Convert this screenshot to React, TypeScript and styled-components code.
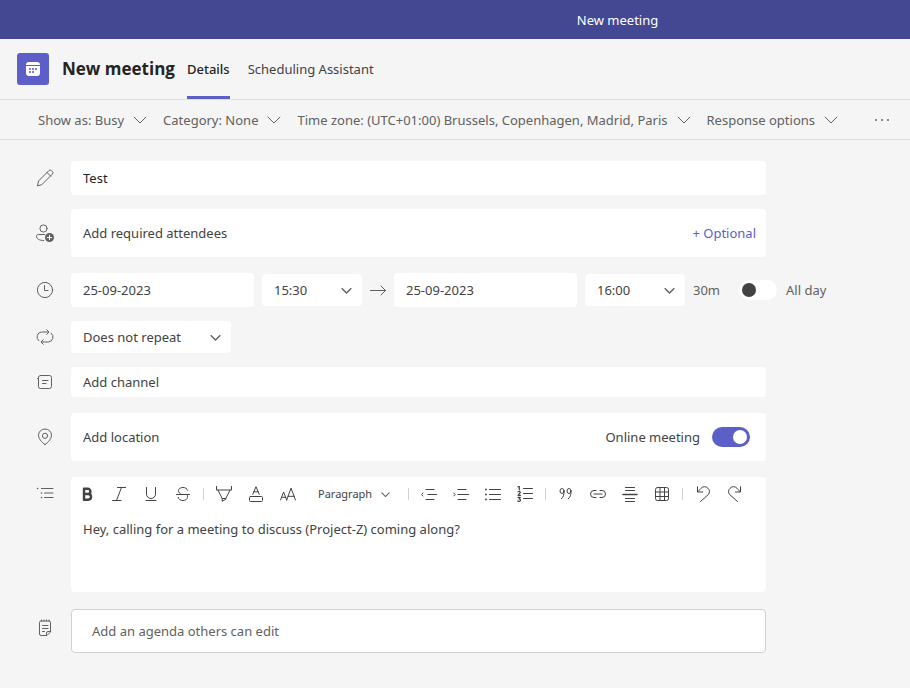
import React from "react";
import styled, { createGlobalStyle } from "styled-components";

const GlobalStyle = createGlobalStyle`
  *, *::before, *::after { box-sizing: border-box; }
  html { min-height: 100%; background: #f5f5f5; }
  body { margin: 0; color: #424242; }
  body, button, input, select, textarea {
    font-family: "Noto Sans", "Open Sans", sans-serif;
    font-size: 13px;
    line-height: 20px;
  }
`;

const TopBar = styled.div`
  display: flex;
  align-items: center;
  justify-content: center;
  height: 39px;
  padding-left: 325px;
  background: #444791;
  color: #ffffff;
`;

const Header = styled.header`
  display: flex;
  align-items: center;
  height: 61px;
  padding: 0 17px;
  border-bottom: 1px solid #dedede;
`;

const AppTile = styled.span`
  display: grid;
  place-items: center;
  width: 32px;
  height: 32px;
  margin-right: 13px;
  border-radius: 3px;
  background: #5b5fc7;
`;

const Title = styled.h1`
  margin: 0 12px 0 0;
  color: #242424;
  font-family: "Open Sans", "Noto Sans", sans-serif;
  font-size: 17px;
  line-height: 24px;
  font-weight: 700;
  white-space: nowrap;
`;

const Tabs = styled.div`
  display: flex;
  align-self: stretch;
  gap: 18px;
`;

const Tab = styled.button<{ $active?: boolean }>`
  padding: 3px 0 0;
  border: 0;
  border-bottom: 3px solid ${(p) => (p.$active ? "#5b5fc7" : "transparent")};
  background: none;
  color: ${(p) => (p.$active ? "#242424" : "#424242")};
  font-weight: ${(p) => (p.$active ? 500 : 400)};
  white-space: nowrap;
`;

const OptionsBar = styled.div`
  display: flex;
  align-items: center;
  gap: 16px;
  height: 40px;
  padding: 0 20px 0 38px;
  border-bottom: 1px solid #dedede;
`;

const OptionButton = styled.button`
  display: flex;
  align-items: center;
  gap: 9px;
  padding: 0;
  border: 0;
  background: none;
  color: #616161;
  white-space: nowrap;
`;

const MoreButton = styled(OptionButton)`
  margin-left: auto;
`;

const Form = styled.form`
  display: flex;
  flex-direction: column;
  padding: 21px 0 35px 36px;
`;

const Row = styled.div<{ $gap?: number; $wide?: boolean; $top?: boolean }>`
  display: grid;
  grid-template-columns: 18px minmax(0, 1fr);
  column-gap: 17px;
  align-items: ${(p) => (p.$top ? "start" : "center")};
  margin-bottom: ${(p) => p.$gap ?? 14}px;
  padding-right: ${(p) => (p.$wide ? 80 : 144)}px;
  color: #616161;
`;

const RowIcon = styled.span<{ $top?: number }>`
  display: flex;
  padding-top: ${(p) => p.$top ?? 0}px;
`;

const Box = styled.div<{ $height: number }>`
  display: flex;
  align-items: center;
  min-height: ${(p) => p.$height}px;
  padding: 0 12px;
  border-radius: 4px;
  background: #ffffff;
`;

const OutlinedBox = styled(Box)`
  padding: 0 20px;
  border: 1px solid #d1d1d1;
`;

const TextInput = styled.input<{ $muted?: boolean }>`
  flex: 1;
  min-width: 0;
  width: 100%;
  padding: 0;
  border: 0;
  outline: 0;
  background: none;
  color: #242424;
  &::placeholder {
    color: ${(p) => (p.$muted ? "#616161" : "#424242")};
    opacity: 1;
  }
`;

const OptionalButton = styled.button`
  margin-right: -2px;
  padding: 0;
  border: 0;
  background: none;
  color: #5b5fc7;
`;

const DateTimeLine = styled.div`
  display: flex;
  align-items: center;
  gap: 8px;
`;

const DateBox = styled(Box)`
  flex: 0 1 183px;
  min-width: 0;
`;

const DateInput = styled(TextInput)`
  color: #424242;
`;

const SelectShell = styled.span<{ $width: number }>`
  display: grid;
  flex: none;
  align-items: center;
  width: ${(p) => p.$width}px;
  height: 32px;
  border-radius: 4px;
  background: #ffffff;
  color: #424242;
  > * { grid-area: 1 / 1; }
  > svg { justify-self: end; margin-right: 10px; pointer-events: none; }
`;

const StyleShell = styled(SelectShell)`
  > svg { margin-right: 14px; }
`;

const NativeSelect = styled.select<{ $small?: boolean }>`
  appearance: none;
  width: 100%;
  height: 100%;
  padding: 0 ${(p) => (p.$small ? 14 : 12)}px;
  border: 0;
  background: none;
  color: #424242;
  font-size: ${(p) => (p.$small ? 11 : 13)}px;
`;

const Duration = styled.span`
  width: 38px;
`;

const SwitchLabel = styled.label<{ $reverse?: boolean }>`
  display: flex;
  flex: none;
  flex-direction: ${(p) => (p.$reverse ? "row-reverse" : "row")};
  align-items: center;
  gap: ${(p) => (p.$reverse ? 12 : 9)}px;
  margin-right: ${(p) => (p.$reverse ? 4 : 0)}px;
  white-space: nowrap;
`;

const Switch = styled.input`
  appearance: none;
  display: flex;
  align-items: center;
  width: 38px;
  height: 20px;
  margin: 0;
  padding: 0 3px;
  border-radius: 10px;
  background: #ffffff;
  &::before {
    content: "";
    width: 14px;
    height: 14px;
    border-radius: 50%;
    background: #424242;
  }
  &:checked {
    justify-content: flex-end;
    background: #5b5fc7;
  }
  &:checked::before { background: #ffffff; }
`;

const Dark = styled.span`
  color: #424242;
`;

const Editor = styled.div`
  border-radius: 4px;
  background: #ffffff;
  overflow: hidden;
`;

const EditorTools = styled.div`
  display: flex;
  align-items: center;
  height: 34px;
`;

const ToolButton = styled.button`
  display: grid;
  flex: 0 1 32px;
  place-items: center;
  height: 32px;
  padding: 0;
  border: 0;
  background: none;
  color: #424242;
`;

const Separator = styled.span`
  flex: none;
  width: 1px;
  height: 12px;
  margin: 0 4px;
  background: #d1d1d1;
`;

const EditorText = styled.textarea`
  display: block;
  width: 100%;
  height: 81px;
  padding: 8px 12px;
  border: 0;
  outline: 0;
  resize: none;
  background: none;
  color: #424242;
`;

type IconProps = { size?: number; weight?: number; children: React.ReactNode };

const Icon = ({ size = 16, weight = 1, children }: IconProps) => (
  <svg width={size} height={size} viewBox={`0 0 ${size} ${size}`} fill="none" stroke="currentColor"
    strokeWidth={weight} strokeLinecap="round" strokeLinejoin="round" aria-hidden="true">
    {children}
  </svg>
);

const ThinChevron = () => (
  <svg width="14" height="8" viewBox="0 0 14 8" fill="none" stroke="currentColor" aria-hidden="true">
    <path d="M.8.8 7 7 13.2.8" />
  </svg>
);

const Chevron = ({ size = 11 }: { size?: number }) => (
  <svg width={size} height={size} viewBox="0 0 11 11" fill="none" stroke="#616161" strokeWidth="1.4" aria-hidden="true">
    <path d="M.7 3.2 5.5 8l4.8-4.8" />
  </svg>
);

const leftIcons = {
  pencil: (
    <Icon size={18}>
      <path d="m1.5 16.5 1.1-4.6L12.8 1.7a1.9 1.900 0 0 1 2.800 0l.7.7a1.900 1.900 0 0 1 0 2.800L6.100 15.400zM11 3.500l3.700 3.700" />
    </Icon>
  ),
  person: (
    <Icon size={18}>
      <circle cx="7.500" cy="4.500" r="3.600" />
      <path d="M8.500 10.500H2.200c-1 0-1.700.7-1.700 1.700 0 2.700 2.800 4.300 7.200 4.300" />
      <circle cx="13.500" cy="13.500" r="4.500" fill="currentColor" stroke="none" />
      <path d="M13.500 11.300v4.400M11.300 13.500h4.400" stroke="#fff" />
    </Icon>
  ),
  clock: (
    <Icon size={18}>
      <circle cx="9" cy="9" r="7.600" />
      <path d="M8.500 4.500v5h3.500" />
    </Icon>
  ),
  repeat: (
    <Icon size={18}>
      <path d="M2.800 12.800A5 5 0 0 1 5.500 4h7.200M10.700 1.700 13 4l-2.300 2.400M15.200 5.200A5 5 0 0 1 12.500 14H5.300M7.300 11.600 5 14l2.300 2.300" />
    </Icon>
  ),
  channel: (
    <Icon size={18}>
      <rect x="2.500" y="2.500" width="13" height="13" rx="2" />
      <path d="M1.500 5.500h1M6.500 7.500h5.500M6.500 10.500h3.500" />
    </Icon>
  ),
  pin: (
    <Icon size={18}>
      <path d="M9 16.600c-.5 0-6.500-4.800-6.500-9.400a6.500 6.200 0 0 1 13 0c0 4.600-6 9.400-6.500 9.400z" />
      <circle cx="9" cy="7.800" r="2.600" />
    </Icon>
  ),
  list: (
    <Icon size={18}>
      <path d="M5.500 4.500h11.500M8.500 9h8.500M8.500 13.500h8.500" />
      <path d="M1.500 4.500h.1M5.500 9h.1M5.500 13.500h.1" strokeWidth="1.600" />
    </Icon>
  ),
  notes: (
    <Icon size={18}>
      <path d="M10.500 16.500H5A1.500 1.500 0 0 1 3.500 15V3.500A1.500 1.500 0 0 1 5 2h8A1.500 1.500 0 0 1 14.500 3.500V12.500zM10.500 16.500V14a1.500 1.500 0 0 1 1.500-1.500H14.500" />
      <path d="M5.500 1v1M8 1v1M10.500 1v1M13 1v1M6.500 6.500h5.500M6.500 9.500h5.500M6.500 12.500h2" />
    </Icon>
  ),
};

const tools: Record<string, React.ReactNode> = {
  Bold: <Icon weight={2.4}><path d="M5 2.800h3.800a2.600 2.600 0 0 1 0 5.200H5zM5 8h4.200a2.800 2.800 0 0 1 0 5.700H5z" /></Icon>,
  Italic: <Icon><path d="M6.500 1.500h8M1.500 14.500h8.500M10.500 1.500l-5 13" /></Icon>,
  Underline: <Icon><path d="M3.500 1.500v6.500a4.500 4.500 0 0 0 9 0V1.500M3 14.500h10" /></Icon>,
  Strikethrough: <Icon><path d="M12.500 4.200C12 2.500 10.300 1.500 8 1.500c-2.600 0-4.500 1.200-4.500 3.200 0 1.800 1.300 2.800 3 3.800M1.500 8.500h13M12.200 8.800c1.300 2.700-.4 5.700-4.200 5.700-2.600 0-4.500-1.200-4.800-3.200" /></Icon>,
  Highlight: <Icon><path d="M.5.500v3.500h15V.500M2 4.200l4.200 8.300v2.800l3.600-2V12.500L14 4.200M6.200 12.500h3.600" /></Icon>,
  "Font color": <Icon><rect x="1.500" y="10.500" width="13" height="5" rx="1" /><path d="m4.800 8.300L8 .7l3.200 7.600M5.900 5.800h4.200" /></Icon>,
  "Font size": <Icon><path d="m.5 14 3.100-8 3.100 8M1.600 11.300h4M6.700 14 11 2.200 15.500 14M8.100 10.300h6" /></Icon>,
  "Decrease indent": <Icon><path d="M5 3.500h8M7 8.500h8.500M5 13.500h8M2 7 .5 8.500 2 10" /></Icon>,
  "Increase indent": <Icon><path d="M5 3.500h8M5 8.500h10.500M5 13.500h8M.7 7l1.500 1.500L.7 10" /></Icon>,
  "Bulleted list": <Icon><path d="M4.500 3.500h11M4.500 8.500h11M4.500 13.500h11" /><path d="M.9 3.500h.1M.9 8.500h.1M.9 13.500h.1" strokeWidth="1.800" /></Icon>,
  "Numbered list": <Icon><path d="M6.500 2.500h9M6.500 7.500h9M6.500 12.500h9" /><path d="m1 .8 1.300-.5v3.600M1 5.900c1-.8 2.700-.2 2.100 1L1 9.300h2.500M1 11.300h2.300L2 12.800c2 0 1.900 2.500.2 2.500-.6 0-1-.1-1.400-.4" strokeWidth="1.200" /></Icon>,
  Quote: <Icon><ellipse cx="4" cy="5" rx="2" ry="2.500" /><ellipse cx="11" cy="5" rx="2" ry="2.500" /><path d="M6 5c.2 3.400-.5 6-2.600 7.800M13 5c.2 3.400-.5 6-2.600 7.800" /></Icon>,
  Link: <Icon><path d="M6 4.500H4a3.500 3.500 0 0 0 0 7h2M10 4.500h2a3.500 3.500 0 0 1 0 7h-2M4 8h8" /></Icon>,
  "Insert divider": <Icon><path d="M3.500 1.500h9M3.500 4.500h9M3.500 12.500h9M3.500 15.500h9" /><path d="M1 8.500h14" strokeWidth="1.500" /></Icon>,
  "Insert table": <Icon><rect x="1.500" y="1.500" width="13" height="13" rx="2" /><path d="M6 1.500v13M10.500 1.500v13M1.500 6h13M1.500 10.500h13" /></Icon>,
  Undo: <Icon><path d="M2.500.800v5.200h5.200M2.700 5.800 6 2.300a4.600 4.600 0 0 1 7 0 4.500 4.500 0 0 1 .3 6.300L5.500 15.500" /></Icon>,
  Redo: <Icon><path d="M13.500.800v5.200H8.300M13.300 5.800 10 2.300a4.600 4.600 0 0 0-7 0 4.500 4.500 0 0 0-.3 6.300L10.500 15.500" /></Icon>,
};

const ToolGroup = ({ names }: { names: string[] }) => (
  <>
    {names.map((name) => (
      <ToolButton key={name} type="button" aria-label={name}>{tools[name]}</ToolButton>
    ))}
  </>
);

const TimeSelect = ({ label, value }: { label: string; value: string }) => (
  <SelectShell $width={100}>
    <NativeSelect aria-label={label} defaultValue={value}>
      <option>{value}</option>
    </NativeSelect>
    <Chevron />
  </SelectShell>
);

const options = [
  "Show as: Busy",
  "Category: None",
  "Time zone: (UTC+01:00) Brussels, Copenhagen, Madrid, Paris",
  "Response options",
];

export default function App() {
  return (
    <>
      <GlobalStyle />
      <TopBar>New meeting</TopBar>
      <Header>
        <AppTile>
          <svg width="14" height="14" viewBox="0 0 14 14" fill="#fff" aria-hidden="true">
            <path d="M0 3a3 3 0 0 1 3-3h8a3 3 0 0 1 3 3z" />
            <path d="M0 4h14v7a3 3 0 0 1-3 3H3a3 3 0 0 1-3-3z" />
            <path d="M3 6h2v2H3zM6 6h2v2H6zM9 6h2v2H9zM3 9h2v2H3zM6 9h2v2H6z" fill="#7c7fd2" />
          </svg>
        </AppTile>
        <Title>New meeting</Title>
        <Tabs role="tablist">
          <Tab role="tab" aria-selected="true" $active>Details</Tab>
          <Tab role="tab" aria-selected="false">Scheduling Assistant</Tab>
        </Tabs>
      </Header>
      <OptionsBar>
        {options.map((text) => (
          <OptionButton key={text} type="button" aria-haspopup="menu">
            {text}
            <ThinChevron />
          </OptionButton>
        ))}
        <MoreButton type="button" aria-label="More options">
          <svg width="16" height="4" viewBox="0 0 16 4" fill="currentColor" aria-hidden="true">
            <circle cx="2" cy="2" r="1" /><circle cx="8" cy="2" r="1" /><circle cx="14" cy="2" r="1" />
          </svg>
        </MoreButton>
      </OptionsBar>

      <Form>
        <Row>
          <RowIcon>{leftIcons.pencil}</RowIcon>
          <Box $height={34}><TextInput aria-label="Title" defaultValue="Test" /></Box>
        </Row>
        <Row $gap={16}>
          <RowIcon>{leftIcons.person}</RowIcon>
          <Box $height={48}>
            <TextInput aria-label="Required attendees" placeholder="Add required attendees" />
            <OptionalButton type="button">+ Optional</OptionalButton>
          </Box>
        </Row>
        <Row $wide>
          <RowIcon>{leftIcons.clock}</RowIcon>
          <DateTimeLine>
            <DateBox $height={34}><DateInput aria-label="Start date" defaultValue="25-09-2023" /></DateBox>
            <TimeSelect label="Start time" value="15:30" />
            <Icon><path d="M.5 8.500h15M11 4l4.500 4.500L11 13" /></Icon>
            <DateBox $height={34}><DateInput aria-label="End date" defaultValue="25-09-2023" /></DateBox>
            <TimeSelect label="End time" value="16:00" />
            <Duration>30m</Duration>
            <SwitchLabel>
              <Switch type="checkbox" role="switch" />
              All day
            </SwitchLabel>
          </DateTimeLine>
        </Row>
        <Row>
          <RowIcon>{leftIcons.repeat}</RowIcon>
          <SelectShell $width={160}>
            <NativeSelect aria-label="Repeat" defaultValue="Does not repeat">
              <option>Does not repeat</option>
            </NativeSelect>
            <Chevron />
          </SelectShell>
        </Row>
        <Row $gap={16}>
          <RowIcon>{leftIcons.channel}</RowIcon>
          <Box $height={30}><TextInput aria-label="Channel" placeholder="Add channel" /></Box>
        </Row>
        <Row $gap={16}>
          <RowIcon>{leftIcons.pin}</RowIcon>
          <Box $height={48}>
            <TextInput aria-label="Location" placeholder="Add location" />
            <SwitchLabel $reverse>
              <Switch type="checkbox" role="switch" defaultChecked />
              <Dark>Online meeting</Dark>
            </SwitchLabel>
          </Box>
        </Row>
        <Row $gap={17} $top>
          <RowIcon $top={7}>{leftIcons.list}</RowIcon>
          <Editor>
            <EditorTools role="toolbar" aria-label="Formatting">
              <ToolGroup names={["Bold", "Italic", "Underline", "Strikethrough"]} />
              <Separator />
              <ToolGroup names={["Highlight", "Font color", "Font size"]} />
              <StyleShell $width={100}>
                <NativeSelect $small aria-label="Text style" defaultValue="Paragraph">
                  <option>Paragraph</option>
                </NativeSelect>
                <Chevron size={9} />
              </StyleShell>
              <Separator />
              <ToolGroup names={["Decrease indent", "Increase indent", "Bulleted list", "Numbered list"]} />
              <Separator />
              <ToolGroup names={["Quote", "Link", "Insert divider", "Insert table"]} />
              <Separator />
              <ToolGroup names={["Undo", "Redo"]} />
            </EditorTools>
            <EditorText
              aria-label="Message"
              defaultValue="Hey, calling for a meeting to discuss (Project-Z) coming along?"
            />
          </Editor>
        </Row>
        <Row $gap={0} $top>
          <RowIcon $top={10}>{leftIcons.notes}</RowIcon>
          <OutlinedBox $height={44}>
            <TextInput $muted aria-label="Agenda" placeholder="Add an agenda others can edit" />
          </OutlinedBox>
        </Row>
      </Form>
    </>
  );
}
